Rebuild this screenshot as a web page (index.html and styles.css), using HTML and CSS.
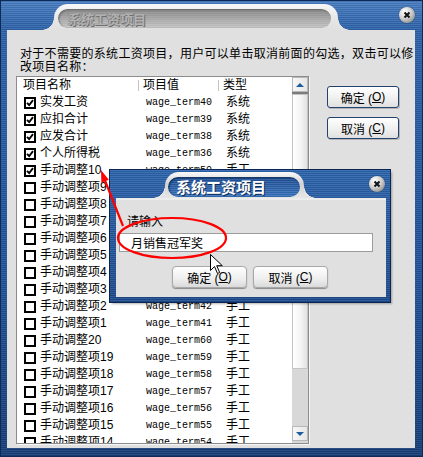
FILE: index.html
```html
<!DOCTYPE html>
<html lang="zh-CN">
<head>
  <meta charset="UTF-8" />
  <title>系统工资项目</title>
  <link rel="stylesheet" href="styles.css">
</head>
<body>

<div class="window">
  <div class="titlebar">
    <div class="tab"><div class="pill">系统工资项目</div></div>
    <span class="close"><svg viewBox="0 0 8 8"><path d="M1.5 1.5l5 5M6.5 1.5l-5 5" /></svg></span>
  </div>

  <div class="content">
    <p class="intro">对于不需要的系统工资项目，用户可以单击取消前面的勾选，双击可以修<br>改项目名称：</p>

    <div class="main">
      <div class="list">
        <div class="cols">
          <div class="head"><span>项目名称</span><span>项目值</span><span>类型</span></div>
          <div class="row"><span class="name"><i class="box on"><svg viewBox="0 0 8 8"><path d="M1 3.8l2.2 2.3L7 1.2" /></svg></i>实发工资</span><span class="val">wage_term40</span><span class="type">系统</span></div>
          <div class="row"><span class="name"><i class="box on"><svg viewBox="0 0 8 8"><path d="M1 3.8l2.2 2.3L7 1.2" /></svg></i>应扣合计</span><span class="val">wage_term39</span><span class="type">系统</span></div>
          <div class="row"><span class="name"><i class="box on"><svg viewBox="0 0 8 8"><path d="M1 3.8l2.2 2.3L7 1.2" /></svg></i>应发合计</span><span class="val">wage_term38</span><span class="type">系统</span></div>
          <div class="row"><span class="name"><i class="box on"><svg viewBox="0 0 8 8"><path d="M1 3.8l2.2 2.3L7 1.2" /></svg></i>个人所得税</span><span class="val">wage_term36</span><span class="type">系统</span></div>
          <div class="row"><span class="name"><i class="box on"><svg viewBox="0 0 8 8"><path d="M1 3.8l2.2 2.3L7 1.2" /></svg></i>手动调整10</span><span class="val">wage_term50</span><span class="type">手工</span></div>
          <div class="row"><span class="name"><i class="box"></i>手动调整项9</span><span class="val">wage_term49</span><span class="type">手工</span></div>
          <div class="row"><span class="name"><i class="box"></i>手动调整项8</span><span class="val">wage_term48</span><span class="type">手工</span></div>
          <div class="row"><span class="name"><i class="box"></i>手动调整项7</span><span class="val">wage_term47</span><span class="type">手工</span></div>
          <div class="row"><span class="name"><i class="box"></i>手动调整项6</span><span class="val">wage_term46</span><span class="type">手工</span></div>
          <div class="row"><span class="name"><i class="box"></i>手动调整项5</span><span class="val">wage_term45</span><span class="type">手工</span></div>
          <div class="row"><span class="name"><i class="box"></i>手动调整项4</span><span class="val">wage_term44</span><span class="type">手工</span></div>
          <div class="row"><span class="name"><i class="box"></i>手动调整项3</span><span class="val">wage_term43</span><span class="type">手工</span></div>
          <div class="row"><span class="name"><i class="box"></i>手动调整项2</span><span class="val">wage_term42</span><span class="type">手工</span></div>
          <div class="row"><span class="name"><i class="box"></i>手动调整项1</span><span class="val">wage_term41</span><span class="type">手工</span></div>
          <div class="row"><span class="name"><i class="box"></i>手动调整20</span><span class="val">wage_term60</span><span class="type">手工</span></div>
          <div class="row"><span class="name"><i class="box"></i>手动调整项19</span><span class="val">wage_term59</span><span class="type">手工</span></div>
          <div class="row"><span class="name"><i class="box"></i>手动调整项18</span><span class="val">wage_term58</span><span class="type">手工</span></div>
          <div class="row"><span class="name"><i class="box"></i>手动调整项17</span><span class="val">wage_term57</span><span class="type">手工</span></div>
          <div class="row"><span class="name"><i class="box"></i>手动调整项16</span><span class="val">wage_term56</span><span class="type">手工</span></div>
          <div class="row"><span class="name"><i class="box"></i>手动调整项15</span><span class="val">wage_term55</span><span class="type">手工</span></div>
          <div class="row"><span class="name"><i class="box"></i>手动调整项14</span><span class="val">wage_term54</span><span class="type">手工</span></div>
        </div>
        <div class="scroll">
          <div class="sb-btn"><i class="up"></i></div>
          <div class="sb-band"></div>
          <div class="sb-thumb"></div>
          <div class="sb-track"></div>
          <div class="sb-btn"><i class="down"></i></div>
        </div>
      </div>

      <div class="side">
        <div class="btn">确定 (<u>O</u>)</div>
        <div class="btn">取消 (<u>C</u>)</div>
      </div>
    </div>
  </div>

  <!-- rename dialog on top of the list -->
  <div class="dialog">
    <div class="titlebar">
      <div class="tab"><div class="pill">系统工资项目</div></div>
      <span class="close"><svg viewBox="0 0 8 8"><path d="M1.5 1.5l5 5M6.5 1.5l-5 5" /></svg></span>
    </div>
    <div class="dlg-body">
      <div class="label">请输入</div>
      <div class="field">月销售冠军奖</div>
      <div class="dlg-buttons">
        <div class="dbtn">确定 (<u>O</u>)</div>
        <div class="dbtn">取消 (<u>C</u>)</div>
      </div>
    </div>
  </div>

  <svg class="markup" width="423" height="457" viewBox="0 0 423 457">
    <ellipse cx="172" cy="238" rx="54" ry="20" />
    <line x1="123" y1="226" x2="104" y2="178" />
    <polygon points="101,170 108.8,179.7 101.4,182.7" />
  </svg>

  <svg class="cursor" width="13" height="20" viewBox="0 0 13 20">
    <path d="M0.5 0.5v16l4-4 3 7 2.2-1-3-6.8h5.6z" />
  </svg>
</div>

</body>
</html>
```

FILE: styles.css
```css
body {
  margin: 0;
  font-family: "Liberation Sans", "Noto Sans CJK SC", sans-serif;
  font-size: 12px;
  color: #000;
}

.window {
  position: relative;
  width: 423px;
  height: 457px;
  box-sizing: border-box;
  padding: 0 8px 9px 7px;
  display: flex;
  flex-direction: column;
  background:
    repeating-linear-gradient(rgba(255, 255, 255, 0.08) 0 1px, rgba(0, 0, 0, 0.08) 1px 2px),
    linear-gradient(#4a7fc4, #2c62aa 30px, #21539a 60%, #173e78);
  box-shadow: inset 0 0 0 1px #0c2a55;
}

/* title bars */

.titlebar {
  height: 30px;
  display: flex;
  align-items: flex-start;
  flex-shrink: 0;
}

.tab {
  position: relative;
  margin: 4px 0 0 47px;
  width: 284px;
  height: 26px;
  box-sizing: border-box;
  padding: 5px 7px 2px 4px;
  border-radius: 14px 14px 0 0;
  background: linear-gradient(#f8f8f8, #e8e8e8 50%, #e0e0e0);
}

.tab::before,
.tab::after {
  content: "";
  position: absolute;
  bottom: 0;
  width: 12px;
  height: 12px;
}

.tab::before {
  left: -12px;
  background: radial-gradient(circle at 0 0, transparent 11.5px, #e2e2e2 12px);
}

.tab::after {
  right: -12px;
  background: radial-gradient(circle at 100% 0, transparent 11.5px, #e2e2e2 12px);
}

.pill {
  height: 19px;
  border-radius: 10px;
  padding-left: 10px;
  font-family: "Noto Sans CJK SC", sans-serif;
  font-size: 13px;
  font-weight: bold;
  line-height: 19px;
  color: #b2b2b2;
  text-shadow: 1px 1px 0 #707070, -1px 0 0 #8a8a8a;
  background:
    repeating-linear-gradient(rgba(0, 0, 0, 0.06) 0 1px, transparent 1px 2px),
    linear-gradient(#8e8e8e, #b4b4b4 60%, #cacaca);
  box-shadow: inset 1px 1px 2px #666;
}

.close {
  margin: 7px 0 0 auto;
  width: 16px;
  height: 16px;
  border-radius: 50%;
  background: radial-gradient(circle at 35% 30%, #ffffff, #cfcfcf 45%, #6e6e6e);
  box-shadow: 0 0 1px #222;
  display: flex;
  align-items: center;
  justify-content: center;
}

.close svg {
  width: 8px;
  height: 8px;
}

.close path {
  stroke: #111;
  stroke-width: 2;
  fill: none;
}

/* main body */

.content {
  flex: 1;
  background: #e0e0e0;
  padding: 16px 0 0 9px;
}

.intro {
  margin: 0 0 4px 4px;
  line-height: 13px;
  letter-spacing: 0.3px;
  font-family: "Noto Sans CJK SC", sans-serif;
}

.main {
  display: flex;
  gap: 18px;
  align-items: flex-start;
}

.list {
  width: 293px;
  height: 368px;
  box-sizing: border-box;
  border: 1px solid #8c8c8c;
  background: #fff;
  display: flex;
  box-shadow: 1px 1px 0 #f6f6f6;
}

.cols {
  flex: 1;
  overflow: hidden;
}

.head,
.row {
  display: grid;
  grid-template-columns: 121px 80px 74px;
  height: 17px;
  line-height: 17px;
  white-space: nowrap;
}

.head span {
  padding-left: 6px;
}

.head span + span {
  padding-left: 5px;
  background: linear-gradient(#c4c4c4, #c4c4c4) no-repeat 0 3px / 1px 11px;
}

.name {
  display: flex;
  align-items: center;
  gap: 4px;
  padding-left: 7px;
}

.box {
  width: 12px;
  height: 12px;
  box-sizing: border-box;
  border: 2px solid #000;
  background: #fff;
  display: flex;
  flex-shrink: 0;
}

.box svg {
  width: 8px;
  height: 8px;
}

.box path {
  stroke: #000;
  stroke-width: 1.9;
  fill: none;
}

.val {
  padding-left: 8px;
  font-family: "Liberation Mono", monospace;
  font-size: 10px;
}

.type {
  padding-left: 8px;
}

/* scrollbar */

.scroll {
  width: 16px;
  display: flex;
  flex-direction: column;
  background: #d8d8d8;
}

.sb-btn {
  height: 15px;
  box-sizing: border-box;
  border: 1px solid #b8b8b8;
  background: linear-gradient(90deg, #f8f8f8, #e6e6e6);
  display: flex;
  align-items: center;
  justify-content: center;
}

.sb-btn:last-child {
  margin-bottom: 2px;
}

.up,
.down {
  width: 0;
  height: 0;
  border-left: 4px solid transparent;
  border-right: 4px solid transparent;
}

.up {
  border-bottom: 4px solid #1c5d9c;
}

.down {
  border-top: 4px solid #1c5d9c;
}

.sb-band {
  height: 2px;
  background: #7c7c7c;
}

.sb-thumb {
  height: 275px;
  box-sizing: border-box;
  border: 1px solid #c4c4c4;
  background: linear-gradient(90deg, #ffffff, #f4f4f4 55%, #e2e2e2);
}

.sb-track {
  flex: 1;
}

/* buttons */

.side {
  display: flex;
  flex-direction: column;
  gap: 9px;
  margin-top: 10px;
}

.btn {
  width: 72px;
  height: 22px;
  box-sizing: border-box;
  border: 1px solid #23426e;
  border-radius: 3px;
  background: linear-gradient(#ffffff, #eeeeee 60%, #e0e0e0);
  box-shadow: 1px 1px 0 #b4b4b4;
  display: flex;
  align-items: center;
  justify-content: center;
}

/* dialog */

.dialog {
  position: absolute;
  left: 110px;
  top: 170px;
  width: 280px;
  height: 132px;
  box-sizing: border-box;
  padding: 0 4px 5px 6px;
  display: flex;
  flex-direction: column;
  background:
    repeating-linear-gradient(rgba(255, 255, 255, 0.08) 0 1px, rgba(0, 0, 0, 0.1) 1px 2px),
    linear-gradient(#2e66b0, #1e4d8f);
  box-shadow: 0 0 0 1px #0b2650, 2px 2px 2px rgba(0, 0, 0, 0.3);
}

.dialog .titlebar {
  height: 28px;
}

.dialog .tab {
  margin: 2px 0 0 49px;
  width: 139px;
  padding: 5px 4px 1px 3px;
  background: linear-gradient(#fafafa, #d2d2d2 45%, #e6e6e6);
}

.dialog .tab::before {
  background: radial-gradient(circle at 0 0, transparent 11.5px, #e4e4e4 12px);
}

.dialog .tab::after {
  background: radial-gradient(circle at 100% 0, transparent 11.5px, #e4e4e4 12px);
}

.dialog .pill {
  height: 20px;
  line-height: 20px;
  padding-left: 8px;
  font-size: 15px;
  color: #fff;
  text-shadow: 1px 1px 0 #0d2a55;
  background:
    repeating-linear-gradient(rgba(255, 255, 255, 0.1) 0 1px, rgba(0, 0, 0, 0.08) 1px 2px),
    linear-gradient(#1f5096, #3a74bf);
  box-shadow: inset 1px 1px 2px #0d2a55;
}

.dialog .close {
  margin: 6px 1px 0 auto;
}

.dlg-body {
  flex: 1;
  background: #e0e0e0;
  border-top: 2px solid #ececec;
  padding-top: 14px;
}

.label {
  margin-left: 11px;
  line-height: 14px;
  font-family: "Noto Sans CJK SC", sans-serif;
}

.field {
  margin: 5px 0 0 3px;
  width: 254px;
  height: 19px;
  box-sizing: border-box;
  border: 1px solid #9c9c9c;
  background: #fff;
  padding-left: 11px;
  line-height: 17px;
  font-family: "Noto Sans CJK SC", sans-serif;
}

.dlg-buttons {
  display: flex;
  gap: 6px;
  margin: 14px 0 0 56px;
}

.dbtn {
  width: 75px;
  height: 22px;
  box-sizing: border-box;
  border: 1px solid #a8a8a8;
  border-radius: 4px;
  background: linear-gradient(#ffffff, #ececec 65%, #dadada);
  box-shadow: 0 1px 1px #8a8a8a;
  display: flex;
  align-items: center;
  justify-content: center;
}

/* annotation overlay */

.markup {
  position: absolute;
  left: 0;
  top: 0;
  pointer-events: none;
}

.markup ellipse,
.markup line {
  stroke: #f00;
  stroke-width: 2.2;
  fill: none;
}

.markup polygon {
  fill: #f00;
}

.cursor {
  position: absolute;
  left: 210px;
  top: 254px;
}

.cursor path {
  fill: #fff;
  stroke: #000;
  stroke-width: 1;
}
```
